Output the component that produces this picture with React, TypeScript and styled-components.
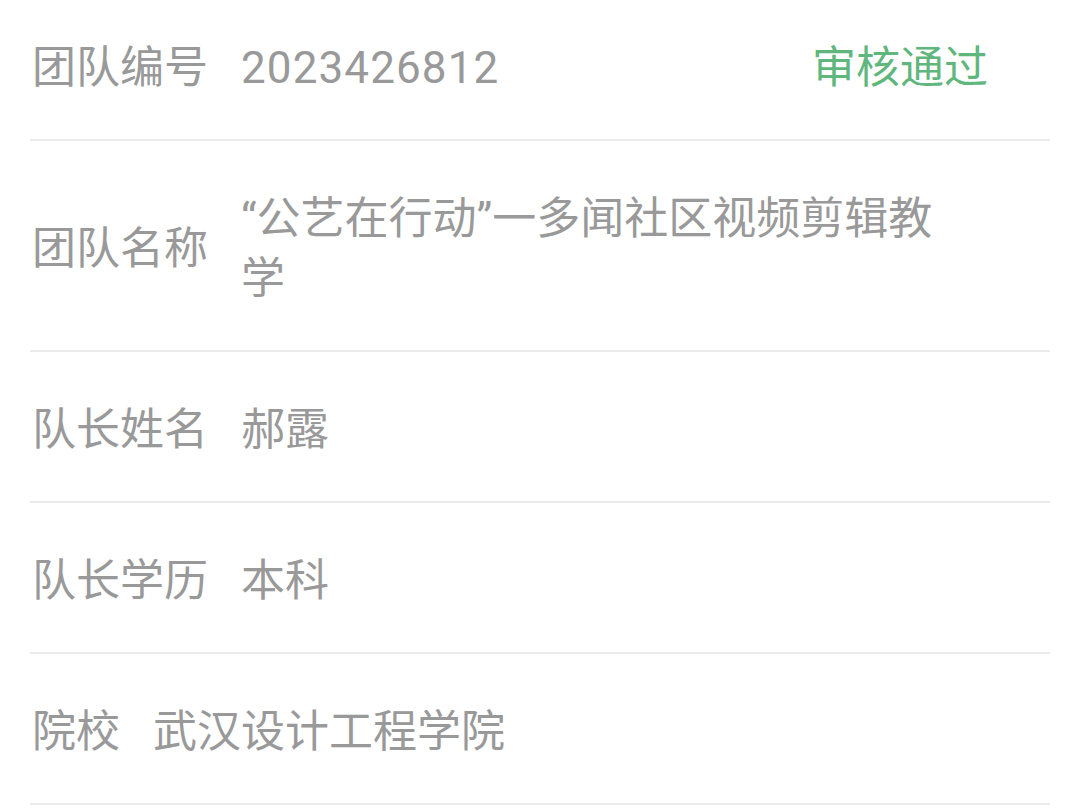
import React from 'react';
import styled, { createGlobalStyle } from 'styled-components';

const GlobalStyle = createGlobalStyle`
	html, body {
		margin: 0;
		padding: 0;
		background: #ffffff;
	}
	body {
		font-family: Roboto, "Noto Sans CJK SC", "Noto Sans", sans-serif;
	}
`;

const List = styled.div`
	margin-top: -10px;
	padding: 0 30px;
	width: 1080px;
	box-sizing: border-box;
`;

const Row = styled.div`
	display: flex;
	align-items: center;
	padding: 48px 0 41px;
	border-bottom: 2px solid #ebebeb;
	font-size: 44px;
	line-height: 60px;
	color: #999999;
`;

const Label = styled.div`
	flex-shrink: 0;
	padding-left: 2px;
	margin-right: 33px;
	white-space: nowrap;
`;

const Value = styled.div<{ $numeric?: boolean }>`
	flex: 1;
	max-width: 715px;
	margin-right: auto;
	word-break: break-all;
	letter-spacing: ${p => (p.$numeric ? '1.1px' : '0')};
`;

const Status = styled.div`
	flex-shrink: 0;
	margin-right: 62px;
	color: #5fb77d;
`;

interface Item {
	label: string;
	value: string;
	status?: string;
}

const items: Item[] = [
	{ label: '团队编号', value: '2023426812', status: '审核通过' },
	{ label: '团队名称', value: '“公艺在行动”一多闻社区视频剪辑教学' },
	{ label: '队长姓名', value: '郝露' },
	{ label: '队长学历', value: '本科' },
	{ label: '院校', value: '武汉设计工程学院' }
];

const App: React.FC = () => {
	return (
		<>
			<GlobalStyle />
			<List>
				{items.map(item => (
					<Row key={item.label}>
						<Label>{item.label}</Label>
						<Value $numeric={/^\d+$/.test(item.value)}>{item.value}</Value>
						{item.status && <Status>{item.status}</Status>}
					</Row>
				))}
			</List>
		</>
	);
};

export default App;
